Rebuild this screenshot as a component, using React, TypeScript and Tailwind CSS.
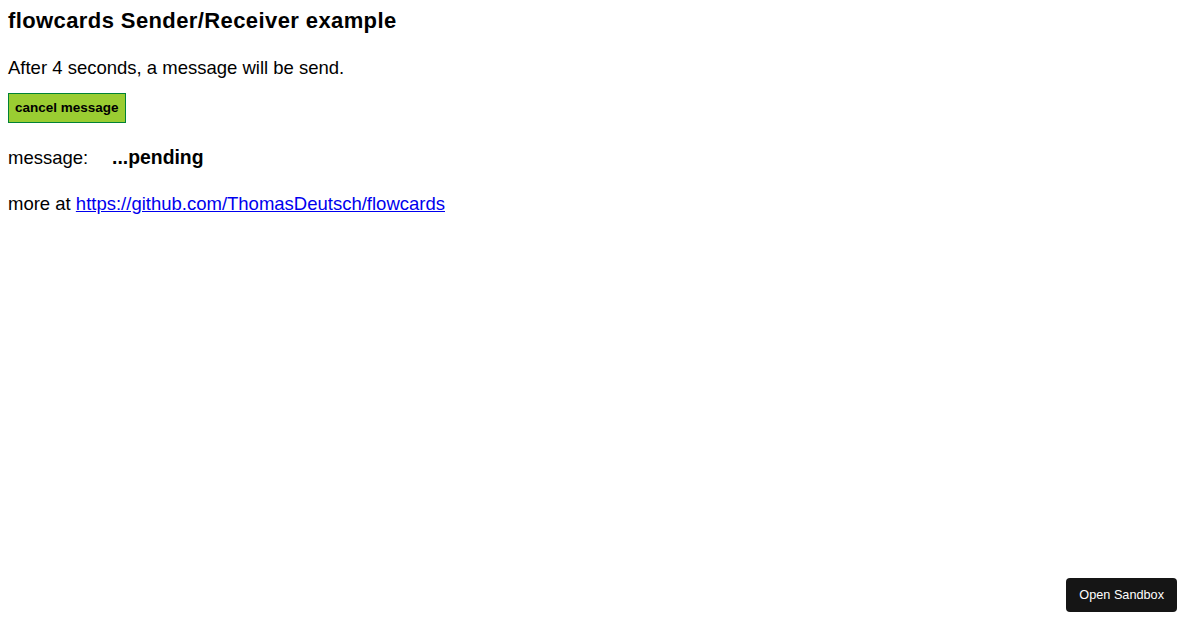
export default function App() {
  return (
    <div className="relative h-[630px] w-[1200px] bg-white p-2 font-['Liberation_Sans',Arial,sans-serif] text-[18.5px] text-black">
      <h3 className="text-[22px] font-bold leading-[26px] tracking-[0.4px]">flowcards Sender/Receiver example</h3>
      <p className="mt-[22px] leading-[24px]">After 4 seconds, a message will be send.</p>
      <button className="mt-[13px] border border-green-700 bg-[#9acd32] px-[6px] py-[6px] text-[13.5px] font-bold leading-[16px]">
        cancel message
      </button>
      <div className="mt-[21px] flex items-baseline leading-[26px]">
        <span className="w-[104px]">message:</span>
        <span className="text-[19.4px] font-bold">...pending</span>
      </div>
      <p className="mt-[21px] leading-[24px]">
        more at{' '}
        <a href="https://github.com/ThomasDeutsch/flowcards" className="text-[#0000ee] underline">
          https://github.com/ThomasDeutsch/flowcards
        </a>
      </p>
      <div className="absolute bottom-[18px] right-[23px] rounded-[4px] bg-[#151515] px-[13px] py-[9px] text-[12.7px] leading-[16px] text-white">
        Open Sandbox
      </div>
    </div>
  );
}
